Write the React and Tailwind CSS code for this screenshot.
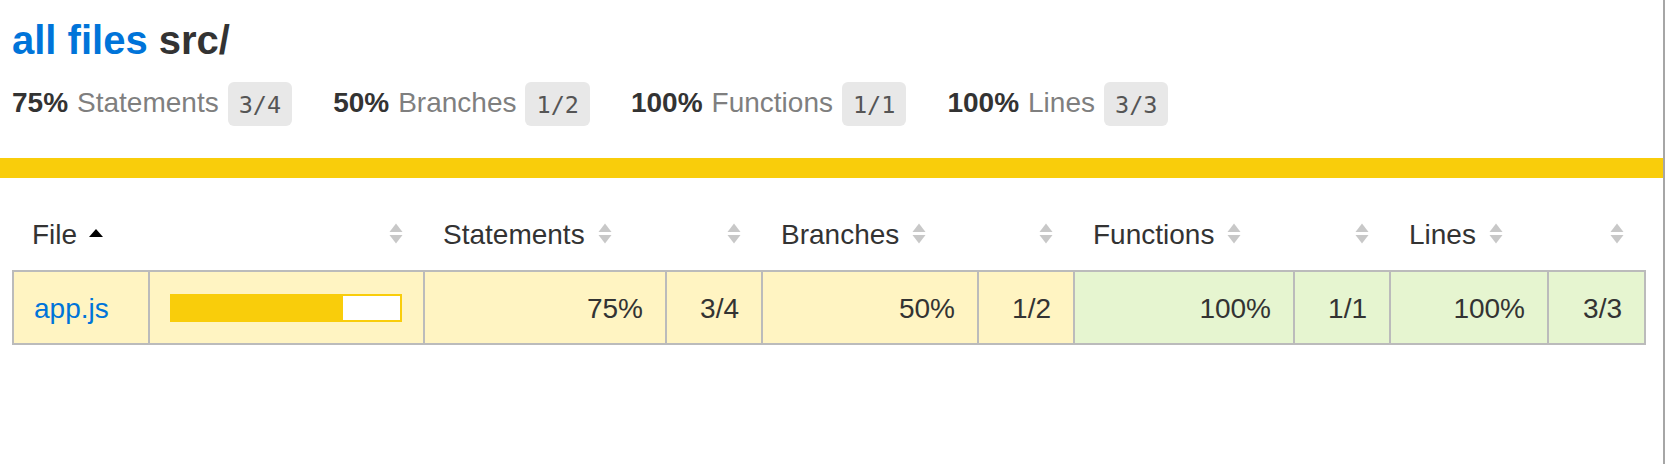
import React from 'react';

const headCols = 'grid grid-cols-[136px_275px_242px_96px_216px_96px_220px_96px_158px_97px]';
const rowCols = 'grid grid-cols-[136px_275px_242px_96px_216px_96px_220px_96px_158px_95px]';

function Sorter({ sorted }) {
  if (sorted) {
    return (
      <svg width="14" height="21" viewBox="0 0 14 21" className="mt-[4px] ml-[12px] shrink-0">
        <path d="M7 6 L14 14 H0 Z" fill="#000" />
      </svg>
    );
  }
  return (
    <svg width="14" height="21" viewBox="0 0 14 21" className="mt-[4px] shrink-0">
      <path d="M7 0.5 L13.5 9 H0.5 Z" fill="#c8c8c8" />
      <path d="M0.5 12 H13.5 L7 20.5 Z" fill="#c8c8c8" />
    </svg>
  );
}

function Stat({ pct, label, frac, last }) {
  return (
    <div className={last ? 'flex items-start' : 'flex items-start mr-[41px]'}>
      <span className="font-bold leading-[41px]">{pct}</span>
      <span className="ml-[9px] text-[#7f7f7f] leading-[41px]">{label}</span>
      <span className="ml-[9px] h-[44px] rounded-[6px] bg-[#e8e8e8] px-[11px] font-['DejaVu_Sans_Mono',monospace] text-[23.5px] leading-[46px] text-[#555]">
        {frac}
      </span>
    </div>
  );
}

function HeadText({ label, sorted }) {
  return (
    <div className="flex items-start pl-[20px] pt-[21px] pb-[19px]">
      <span className="leading-[32px]">{label}</span>
      {sorted ? <Sorter sorted /> : <span className="ml-[13px] flex"><Sorter /></span>}
    </div>
  );
}

function HeadRight() {
  return (
    <div className="flex justify-end pr-[20px] pt-[21px] pb-[19px]">
      <span className="h-[32px]" />
      <Sorter />
    </div>
  );
}

function Cell({ children, bg, last }) {
  return (
    <div className={`${bg} ${last ? '' : 'border-r-2 border-[#bbb]'} pr-[22px] pt-[21px] pb-[19px] text-right leading-[31px]`}>
      {children}
    </div>
  );
}

export default function App() {
  const medium = 'bg-[#fff4c2]';
  const high = 'bg-[#e6f5d0]';
  return (
    <div className="flex h-[464px] w-[1666px] bg-white font-['Liberation_Sans',Arial,sans-serif] text-[28px] text-[#333]">
      <div className="w-[1663px] shrink-0">
        <div className="pl-[12px] pt-[16px]">
          <h1 className="text-[40px] font-bold leading-[48px]">
            <a className="text-[#0074D9]">all files</a> src/
          </h1>
          <div className="mt-[18px] flex items-start">
            <Stat pct="75%" label="Statements" frac="3/4" />
            <Stat pct="50%" label="Branches" frac="1/2" />
            <Stat pct="100%" label="Functions" frac="1/1" />
            <Stat pct="100%" label="Lines" frac="3/3" last />
          </div>
        </div>

        <div className="mt-[32px] h-[20px] bg-[#f9cd0b]" />

        <div className={`${headCols} ml-[12px] mt-[20px] w-[1632px]`}>
          <HeadText label="File" sorted />
          <HeadRight />
          <HeadText label="Statements" />
          <HeadRight />
          <HeadText label="Branches" />
          <HeadRight />
          <HeadText label="Functions" />
          <HeadRight />
          <HeadText label="Lines" />
          <HeadRight />
        </div>

        <div className={`${rowCols} ml-[12px] w-[1634px] border-2 border-[#bbb]`}>
          <div className={`${medium} border-r-2 border-[#bbb] pl-[20px] pt-[21px] pb-[19px] leading-[31px]`}>
            <a className="text-[#0074D9]">app.js</a>
          </div>
          <div className={`${medium} flex items-center border-r-2 border-[#bbb] pl-[20px]`}>
            <div className="flex h-[28px] w-[232px] border-2 border-[#f9cd0b]">
              <div className="h-full w-[171px] bg-[#f9cd0b]" />
              <div className="h-full flex-1 bg-white" />
            </div>
          </div>
          <Cell bg={medium}>75%</Cell>
          <Cell bg={medium}>3/4</Cell>
          <Cell bg={medium}>50%</Cell>
          <Cell bg={medium}>1/2</Cell>
          <Cell bg={high}>100%</Cell>
          <Cell bg={high}>1/1</Cell>
          <Cell bg={high}>100%</Cell>
          <Cell bg={high} last>3/3</Cell>
        </div>
      </div>
      <div className="w-[2px] shrink-0 bg-[#a6a6a6]" />
    </div>
  );
}
